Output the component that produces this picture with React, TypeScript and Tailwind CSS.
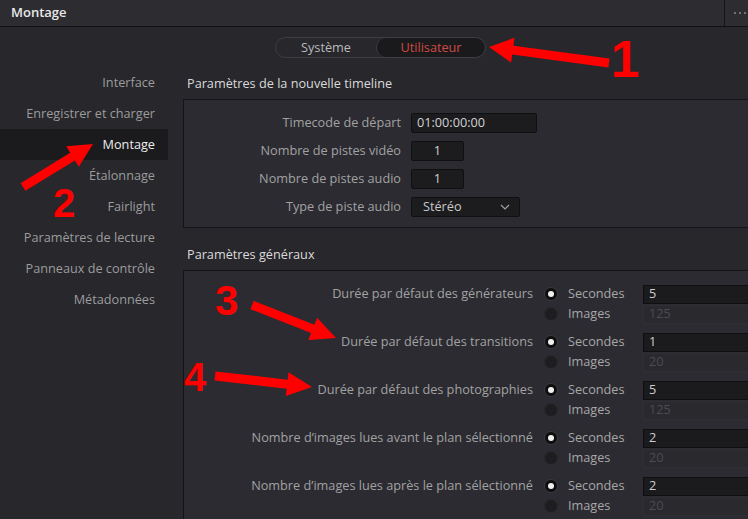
import React from "react";

type Pt = [number, number];

function arrowPoints(tail: Pt, tip: Pt, shaft: number, headLen: number, headW: number): string {
  const dx = tip[0] - tail[0];
  const dy = tip[1] - tail[1];
  const len = Math.hypot(dx, dy);
  const ux = dx / len;
  const uy = dy / len;
  const nx = -uy;
  const ny = ux;
  const bx = tip[0] - ux * headLen;
  const by = tip[1] - uy * headLen;
  const p: Pt[] = [
    [tail[0] + nx * shaft / 2, tail[1] + ny * shaft / 2],
    [bx + nx * shaft / 2, by + ny * shaft / 2],
    [bx + nx * headW / 2, by + ny * headW / 2],
    [tip[0], tip[1]],
    [bx - nx * headW / 2, by - ny * headW / 2],
    [bx - nx * shaft / 2, by - ny * shaft / 2],
    [tail[0] - nx * shaft / 2, tail[1] - ny * shaft / 2],
  ];
  return p.map((q) => `${q[0].toFixed(1)},${q[1].toFixed(1)}`).join(" ");
}

const sidebar = [
  "Interface",
  "Enregistrer et charger",
  "Montage",
  "Étalonnage",
  "Fairlight",
  "Paramètres de lecture",
  "Panneaux de contrôle",
  "Métadonnées",
];

const groups = [
  { label: "Durée par défaut des générateurs", sec: "5", img: "125" },
  { label: "Durée par défaut des transitions", sec: "1", img: "20" },
  { label: "Durée par défaut des photographies", sec: "5", img: "125" },
  { label: "Nombre d’images lues avant le plan sélectionné", sec: "2", img: "20" },
  { label: "Nombre d’images lues après le plan sélectionné", sec: "2", img: "20" },
];

function Radio({ on }: { on: boolean }) {
  return on ? (
    <div className="shrink-0 w-[14px] h-[14px] rounded-full bg-[#0e0e10] border border-[#3c3c40] flex items-center justify-center">
      <div className="w-[6px] h-[6px] rounded-full bg-[#f0f0f0]" />
    </div>
  ) : (
    <div className="shrink-0 w-[14px] h-[14px] rounded-full bg-[#1e1e20] border border-[#2a2a2d]" />
  );
}

export default function App() {
  return (
    <div
      className="relative w-[748px] h-[519px] overflow-hidden bg-[#27272c] text-[12.7px]"
      style={{ fontFamily: '"Open Sans", "Noto Sans", sans-serif' }}
    >
      {/* header */}
      <div className="h-[27px] flex items-stretch bg-[#2c2c31] border-b border-[#111113]">
        <div className="flex-1 flex items-center pl-[11px] text-[#e8e8e8] text-[13px] font-semibold">Montage</div>
        <div className="w-[24px] border-l border-[#151517] flex items-center pl-[9px] gap-[3px]">
          <div className="w-[2px] h-[2px] rounded-full bg-[#888]" />
          <div className="w-[2px] h-[2px] rounded-full bg-[#888]" />
          <div className="w-[2px] h-[2px] rounded-full bg-[#888]" />
        </div>
      </div>

      <div className="flex">
        {/* sidebar */}
        <div className="w-[168px] shrink-0 pt-[40px] flex flex-col">
          {sidebar.map((s) => (
            <div
              key={s}
              className={
                "h-[31px] flex items-center justify-end pr-[13px] whitespace-nowrap " +
                (s === "Montage" ? "bg-[#1b1b1e] text-[#ececec]" : "text-[#9c9c9c]")
              }
            >
              {s}
            </div>
          ))}
        </div>

        {/* main */}
        <div className="flex-1 min-w-0 pl-[15px] flex flex-col">
          <div className="mt-[10px] ml-[92px] flex h-[21px] w-[211px] rounded-full border border-[#3e3e43] overflow-hidden">
            <div className="w-[100px] flex items-center justify-center text-[#b9b9b9]">Système</div>
            <div className="flex-1 flex items-center justify-center bg-[#1a1a1d] rounded-full border-l border-[#3e3e43] text-[#cf4a40]">
              Utilisateur
            </div>
          </div>

          <div className="mt-[17px] mb-[7px] h-[17px] leading-[17px] pl-[4px] text-[#dadada]">
            Paramètres de la nouvelle timeline
          </div>
          <div className="border border-r-0 border-[#141416] bg-[#2b2b31] pt-[13px] pb-[10px] flex flex-col gap-[8px]">
            <div className="flex items-center h-[20px]">
              <div className="w-[217px] shrink-0 text-right text-[#a2a2a2]">Timecode de départ</div>
              <div className="ml-[10px] w-[126px] h-[20px] rounded-[2px] bg-[#1c1c1f] border border-[#101012] pl-[5px] flex items-center text-[#d2d2d2]">
                01:00:00:00
              </div>
            </div>
            <div className="flex items-center h-[20px]">
              <div className="w-[217px] shrink-0 text-right text-[#a2a2a2]">Nombre de pistes vidéo</div>
              <div className="ml-[10px] w-[53px] h-[20px] rounded-[2px] bg-[#1c1c1f] border border-[#101012] flex items-center justify-center text-[#d2d2d2]">
                1
              </div>
            </div>
            <div className="flex items-center h-[20px]">
              <div className="w-[217px] shrink-0 text-right text-[#a2a2a2]">Nombre de pistes audio</div>
              <div className="ml-[10px] w-[53px] h-[20px] rounded-[2px] bg-[#1c1c1f] border border-[#101012] flex items-center justify-center text-[#d2d2d2]">
                1
              </div>
            </div>
            <div className="flex items-center h-[20px]">
              <div className="w-[217px] shrink-0 text-right text-[#a2a2a2]">Type de piste audio</div>
              <div className="ml-[10px] w-[109px] h-[20px] rounded-[2px] bg-[#1c1c1f] border border-[#101012] pl-[11px] pr-[9px] flex items-center justify-between text-[#c8c8c8]">
                <span>Stéréo</span>
                <svg width="10" height="6" viewBox="0 0 10 6">
                  <path d="M1 1 L5 5 L9 1" fill="none" stroke="#a0a0a0" strokeWidth="1.2" />
                </svg>
              </div>
            </div>
          </div>

          <div className="mt-[18px] mb-[7px] h-[17px] leading-[17px] pl-[4px] text-[#dadada]">
            Paramètres généraux
          </div>
          <div className="border border-r-0 border-b-0 border-[#141416] bg-[#2b2b31] pt-[13px] flex flex-col gap-[8px] h-[260px]">
            {groups.map((g) => (
              <div key={g.label} className="flex">
                <div className="w-[349px] shrink-0 h-[20px] flex items-center justify-end text-[#a2a2a2] whitespace-nowrap">
                  {g.label}
                </div>
                <div className="ml-[11px] flex flex-col shrink-0">
                  <div className="h-[20px] flex items-center">
                    <Radio on />
                    <div className="ml-[10px] w-[75px] shrink-0 text-[#a8a8a8]">Secondes</div>
                    <div className="w-[120px] shrink-0 h-[19px] bg-[#1b1b1e] border border-[#0f0f11] pl-[5px] flex items-center text-[#cfcfcf]">
                      {g.sec}
                    </div>
                  </div>
                  <div className="h-[20px] flex items-center">
                    <Radio on={false} />
                    <div className="ml-[10px] w-[75px] shrink-0 text-[#a8a8a8]">Images</div>
                    <div className="w-[120px] shrink-0 h-[19px] bg-[#29292e] border border-[#2e2e33] pl-[5px] flex items-center text-[#4c4c52]">
                      {g.img}
                    </div>
                  </div>
                </div>
              </div>
            ))}
          </div>
        </div>
      </div>

      {/* annotations */}
      <svg className="absolute left-0 top-0 pointer-events-none" width="748" height="519" viewBox="0 0 748 519">
        <polygon points={arrowPoints([609, 63], [489, 47], 9, 24, 25)} fill="#ff0000" />
        <polygon points={arrowPoints([23, 187], [93, 144], 9, 24, 24)} fill="#ff0000" />
        <polygon points={arrowPoints([252, 305], [336, 338], 9, 25, 24)} fill="#ff0000" />
        <polygon points={arrowPoints([215, 376], [312, 387], 9, 25, 24)} fill="#ff0000" />
      </svg>
      <div
        className="absolute left-[611px] top-[33px] text-[52px] leading-none font-bold text-[#ff0000]"
        style={{ fontFamily: '"Liberation Sans", Arial, sans-serif' }}
      >
        1
      </div>
      <div
        className="absolute left-[53px] top-[183px] text-[40px] leading-none font-bold text-[#ff0000]"
        style={{ fontFamily: '"Liberation Sans", Arial, sans-serif' }}
      >
        2
      </div>
      <div
        className="absolute left-[215px] top-[280px] text-[42px] leading-none font-bold text-[#ff0000]"
        style={{ fontFamily: '"Liberation Sans", Arial, sans-serif' }}
      >
        3
      </div>
      <div
        className="absolute left-[184px] top-[357px] text-[40px] leading-none font-bold text-[#ff0000]"
        style={{ fontFamily: '"Liberation Sans", Arial, sans-serif' }}
      >
        4
      </div>
    </div>
  );
}
